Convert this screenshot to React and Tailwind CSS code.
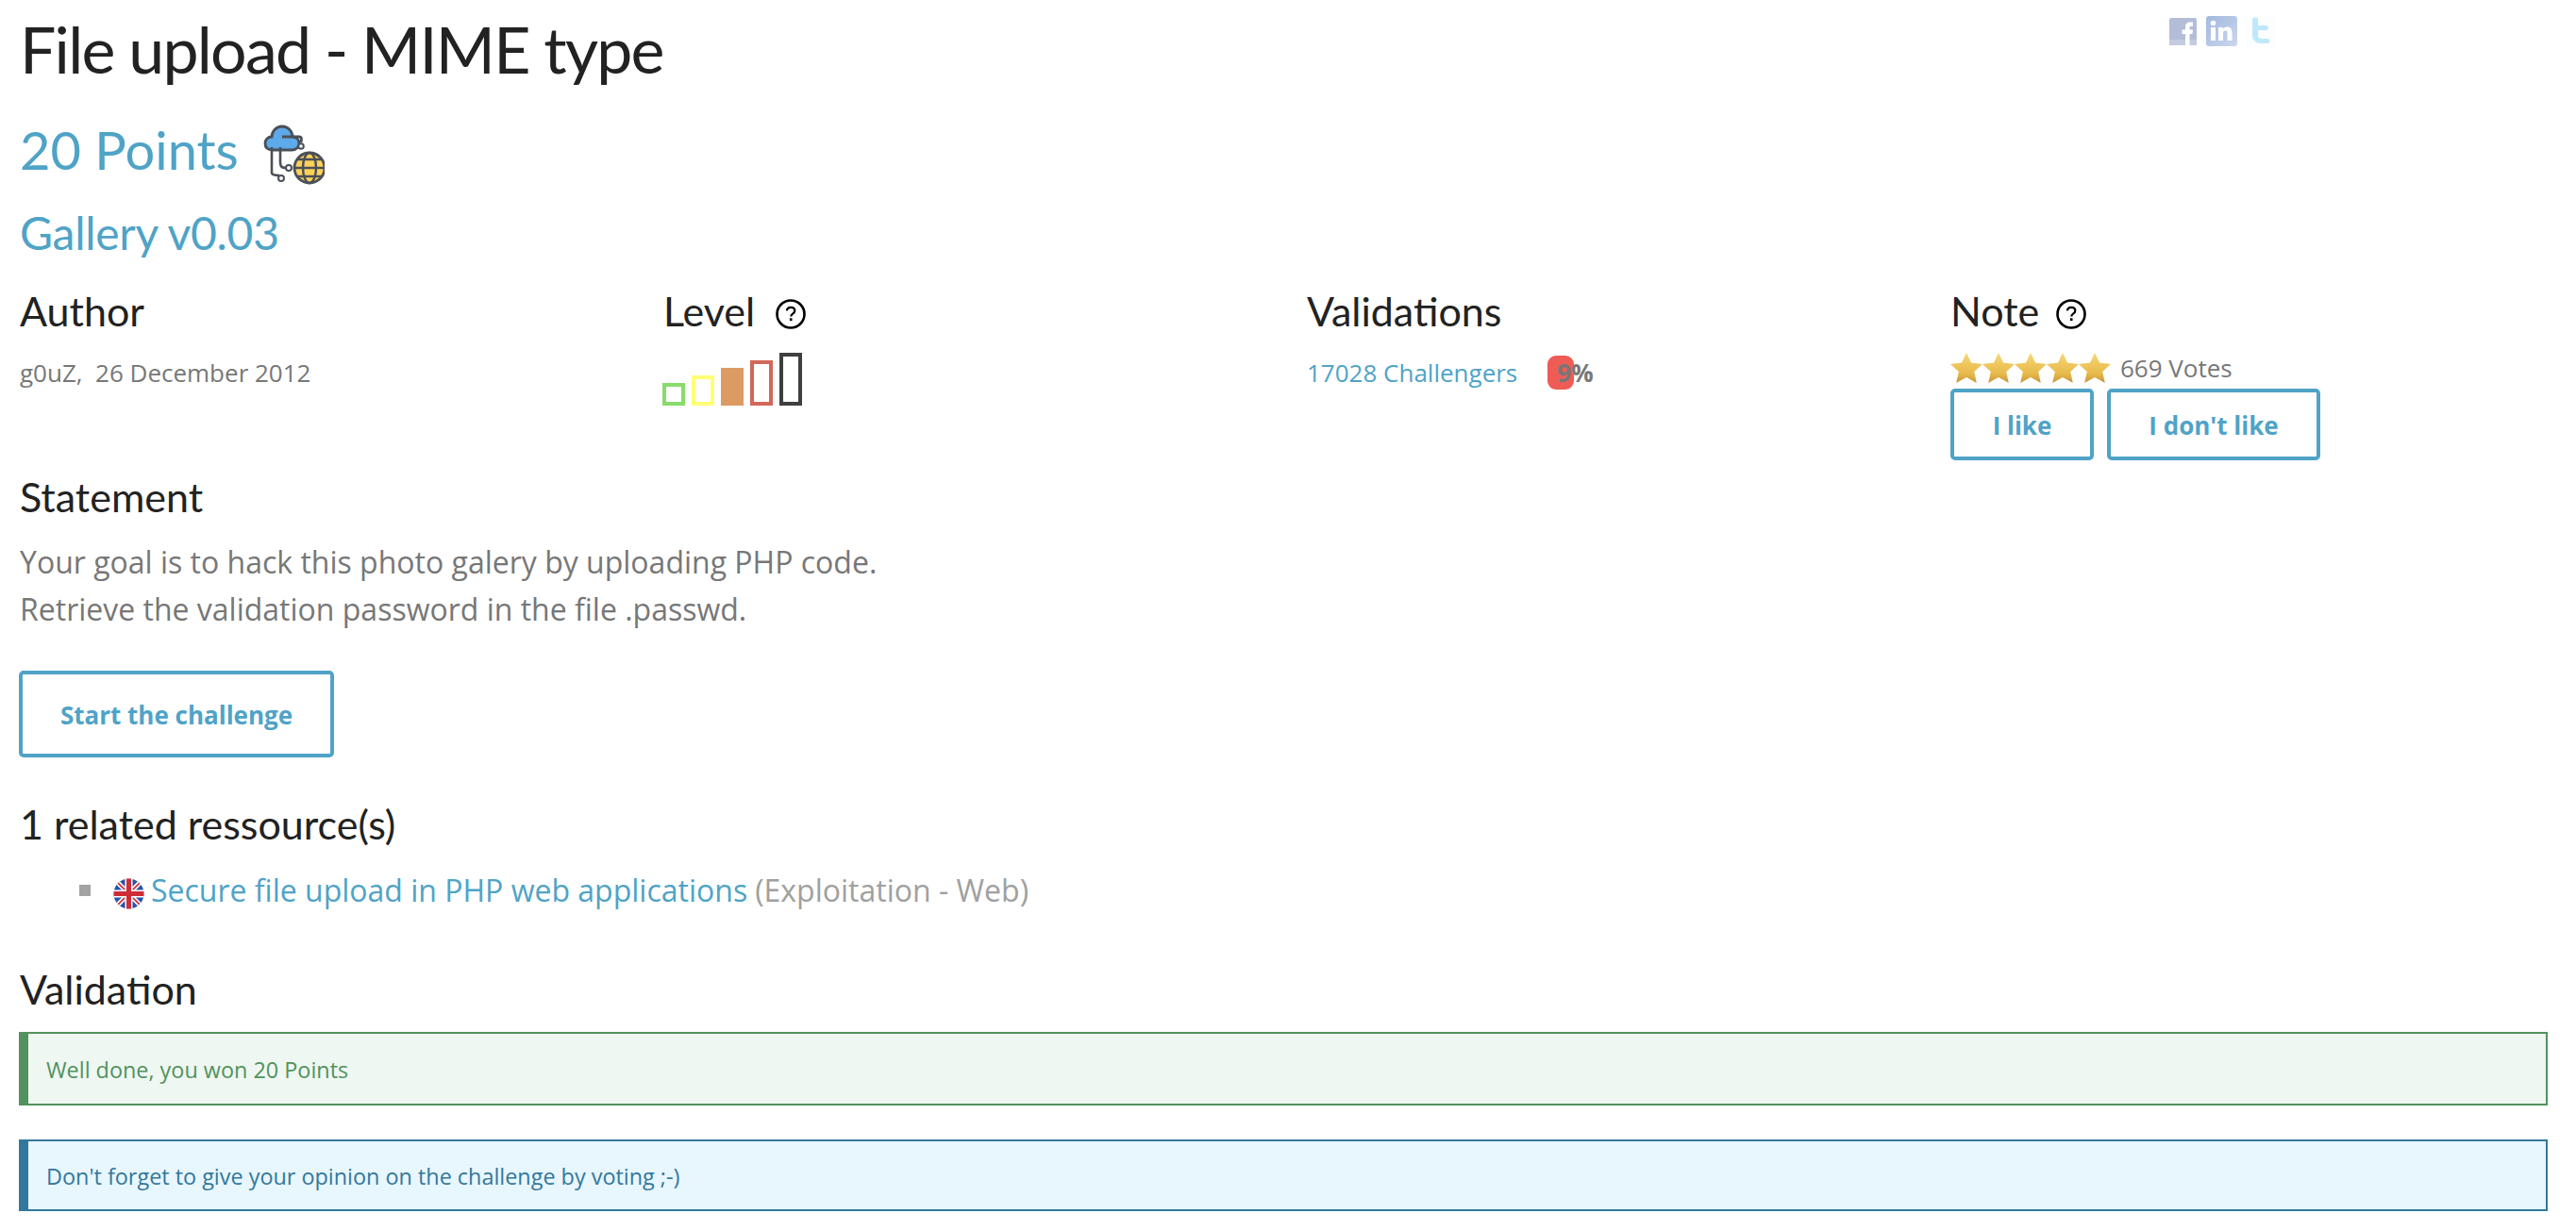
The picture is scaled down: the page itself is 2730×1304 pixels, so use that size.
const HEADING = "font-['Lato',sans-serif]"
const SECTION = `${HEADING} text-[43px] leading-[56px] text-[#222222]`

function HelpIcon({ className }) {
  return (
    <svg width="34" height="34" viewBox="0 0 34 34" className={`mt-[14px] ${className}`}>
      <circle cx="17" cy="17" r="14.5" fill="#fff" stroke="#000" strokeWidth="2.6" />
      <path d="M12.8 13.4c.3-2.4 2-3.6 4.3-3.6 2.5 0 4.2 1.4 4.2 3.5 0 1.7-.9 2.5-2.2 3.3-1.3.8-1.8 1.4-1.8 2.9" fill="none" stroke="#000" strokeWidth="2.2" />
      <rect x="15.9" y="21.3" width="2.6" height="2.8" fill="#000" />
    </svg>
  )
}

function CloudIcon() {
  return (
    <svg width="66" height="66" viewBox="0 0 66 66" className="ml-[25px] mt-[10px]">
      <path d="M11 28c-6 0-8-3.500-8-7 0-4 3-7 7-7 0-6 5-11 11-11s11 5 11 11c4 0 7 3 7 7 0 3.500-3 7-7 7z" fill="#5da9e9" stroke="#4a5058" strokeWidth="2.800" />
      <path d="M21 14h18c4 0 2 5 2 6" fill="none" stroke="#4a5058" strokeWidth="2.800" />
      <circle cx="41" cy="24" r="2.800" fill="#fff" stroke="#4a5058" strokeWidth="2" />
      <path d="M14 28v16c0 6 3 6 8 6M5 28v27c0 2 2 3 8 3" fill="none" stroke="#4a5058" strokeWidth="2.600" transform="translate(5 -3)" />
      <circle cx="28" cy="47" r="3" fill="#fff" stroke="#4a5058" strokeWidth="2" />
      <circle cx="20" cy="58" r="3" fill="#fff" stroke="#4a5058" strokeWidth="2" />
      <circle cx="50" cy="47" r="16" fill="#ffd257" stroke="#4a5058" strokeWidth="2.800" />
      <ellipse cx="50" cy="47" rx="7" ry="16" fill="none" stroke="#4a5058" strokeWidth="2.500" />
      <path d="M34 47h32M37 38h26M37 56h26" fill="none" stroke="#4a5058" strokeWidth="2.500" />
    </svg>
  )
}

function LevelBars() {
  return (
    <div className="flex items-end gap-[7px] mt-[16px] ml-[-1px] h-[56px]">
      <div className="w-[24px] h-[24px] border-[4px] border-[#88dc6a]" />
      <div className="w-[24px] h-[32px] border-[4px] border-[#ffff77]" />
      <div className="w-[24px] h-[40px] bg-[#dc9b63]" />
      <div className="w-[24px] h-[48px] border-[4px] border-[#d2685a]" />
      <div className="w-[24px] h-[56px] border-[4px] border-[#3f3f3f]" />
    </div>
  )
}

function Star() {
  return (
    <svg width="34" height="32" viewBox="0 0 34 32">
      <defs>
        <linearGradient id="starFill" x1="0" y1="0" x2="0" y2="1">
          <stop offset="0" stopColor="#f6d877" />
          <stop offset="0.7" stopColor="#e8b94a" />
          <stop offset="1" stopColor="#c9933a" />
        </linearGradient>
      </defs>
      <path d="M17 0l5 10.500 12 1.500-8.800 8 2.600 12L17 26l-10.800 6 2.600-12L0 12l12-1.500z" fill="url(#starFill)" />
    </svg>
  )
}

function Flag() {
  return (
    <svg width="33" height="33" viewBox="0 0 33 33" className="mr-[7px] shrink-0 translate-y-[3px]">
      <defs>
        <clipPath id="flagClip"><circle cx="16.500" cy="16.500" r="16" /></clipPath>
      </defs>
      <g clipPath="url(#flagClip)">
        <rect width="33" height="33" fill="#2a52a8" />
        <path d="M0 0L33 33M33 0L0 33" stroke="#fff" strokeWidth="5" />
        <path d="M0 0L33 33M33 0L0 33" stroke="#cf2d35" strokeWidth="1.600" />
        <path d="M16.500 0V33M0 16.500H33" stroke="#fff" strokeWidth="8" />
        <path d="M16.500 0V33M0 16.500H33" stroke="#cf2d35" strokeWidth="5" />
      </g>
    </svg>
  )
}

function Social() {
  return (
    <div className="flex items-start gap-[3px] mr-[288px] mt-[17px]">
      <svg width="30" height="30" viewBox="0 0 30 30" className="mt-[2px] mr-[6px]">
        <rect width="29" height="29" rx="2" fill="#b4bdd8" />
        <rect y="23" width="29" height="6" fill="#c3cbe0" />
        <path d="M17 29V17h-3.500v-4.500H17V9.500C17 6 19 4.500 22 4.500h3v4.200h-2c-1.200 0-1.500.6-1.500 1.600v2.200h3.500l-.5 4.500h-3v12z" fill="#fff" />
      </svg>
      <svg width="33" height="32" viewBox="0 0 33 32">
        <defs>
          <linearGradient id="inFill" x1="0" y1="0" x2="1" y2="1">
            <stop offset="0" stopColor="#a3b8de" />
            <stop offset="1" stopColor="#cad7ee" />
          </linearGradient>
        </defs>
        <rect width="33" height="32" rx="3" fill="url(#inFill)" />
        <rect x="5" y="12" width="5" height="14" fill="#fff" />
        <circle cx="7.500" cy="7.500" r="2.800" fill="#fff" />
        <path d="M13 12h4.800v2c1-1.600 2.700-2.400 4.500-2.400 3.600 0 5.200 2.300 5.200 6V26h-5v-7.500c0-1.800-.6-2.900-2.100-2.900-1.600 0-2.400 1.200-2.400 3V26h-5z" fill="#fff" />
      </svg>
      <svg width="32" height="32" viewBox="0 0 32 32" className="ml-[6px]">
        <rect width="32" height="32" fill="#fbfdfe" />
        <path d="M7 4c0-1.500 1-2.500 2.600-2.500h1C12.100 1.500 13 2.500 13 4v6h8.500c1.500 0 2.500 1 2.500 2.500S23 15 21.500 15H13v5c0 2.500 1.200 4 4 4h6c1.500 0 2.500 1 2.500 2.500S24.500 29 23 29h-7C10 29 7 25.500 7 20z" fill="#bfe9fa" />
      </svg>
    </div>
  )
}

function OutlineButton({ label, className }) {
  return (
    <div className={`flex items-center justify-center border-[4px] border-[#4fa3c7] rounded-[5px] pt-[2px] font-bold text-[#4fa3c7] ${className}`}>
      {label}
    </div>
  )
}

function Alert({ text, className }) {
  return (
    <div className={`flex items-center border-2 border-l-[10px] pl-[19px] pt-[3px] text-[23.4px] ${className}`}>
      {text}
    </div>
  )
}

export default function App() {
  return (
    <div className="min-h-[1304px] bg-white pl-[20px] pr-[30px] font-['Open_Sans',sans-serif] text-[#777777] overflow-hidden">
      <div className="flex items-start justify-between">
        <h1 className={`${HEADING} text-[68px] leading-[76px] text-[#222222] tracking-[-1.75px] mt-[14px] ml-[1px]`}>File upload - MIME type</h1>
        <Social />
      </div>

      <div className="flex items-center mt-[34px] ml-[1px] h-[70px]">
        <span className={`${HEADING} text-[56px] leading-[70px] text-[#4fa3c7]`}>20 Points</span>
        <CloudIcon />
      </div>
      <div className={`${HEADING} text-[48px] leading-[60px] text-[#4fa3c7] tracking-[-0.3px] mt-[23px] ml-[1px]`}>Gallery v0.03</div>

      <div className="grid grid-cols-[682px_682px_682px_682px] mt-[25px] ml-[1px]">
        <div>
          <div className={SECTION}>Author</div>
          <div className="text-[26px] leading-[36px] mt-[19px]">g0uZ,&nbsp; 26 December 2012</div>
        </div>
        <div>
          <div className="flex">
            <span className={SECTION}>Level</span>
            <HelpIcon className="ml-[21px]" />
          </div>
          <LevelBars />
        </div>
        <div>
          <div className={SECTION}>Validations</div>
          <div className="flex items-center text-[26px] leading-[36px] mt-[19px]">
            <span className="text-[#4fa3c7]">17028 Challengers</span>
            <span className="relative ml-[32px] font-bold text-[#777777]">
              <span className="absolute left-0 top-0 h-[36px] w-[28px] rounded-[9px] bg-[#ef5b55]" />
              <span className="relative pl-[10px]">9%</span>
            </span>
          </div>
        </div>
        <div>
          <div className="flex">
            <span className={SECTION}>Note</span>
            <HelpIcon className="ml-[17px]" />
          </div>
          <div className="flex items-center mt-[17px] h-[30px]">
            <Star /><Star /><Star /><Star /><Star />
            <span className="text-[26px] leading-[30px] ml-[10px]">669 Votes</span>
          </div>
          <div className="flex gap-[14px] mt-[7px] text-[26px]">
            <OutlineButton label="I like" className="w-[152px] h-[76px]" />
            <OutlineButton label="I don't like" className="w-[226px] h-[76px]" />
          </div>
        </div>
      </div>

      <div className={`${SECTION} mt-[11px] ml-[1px]`}>Statement</div>
      <div className="text-[32px] leading-[50px] ml-[1px] mt-[16px]">
        <p>Your goal is to hack this photo galery by uploading PHP code.</p>
        <p>Retrieve the validation password in the file .passwd.</p>
      </div>

      <OutlineButton label="Start the challenge" className="w-[334px] h-[92px] mt-[40px] text-[26px]" />

      <div className={`${SECTION} mt-[43px] ml-[1px]`}>1 related ressource(s)</div>
      <div className="flex items-center text-[32px] leading-[50px] mt-[17px] ml-[64px]">
        <span className="w-[12px] h-[12px] bg-[#a3a3a3] mr-[24px]" />
        <Flag />
        <span className="text-[#4fa3c7]">Secure file upload in PHP web applications</span>
        <span className="text-[#a0a0a0] ml-[8px]">(Exploitation - Web)</span>
      </div>

      <div className={`${SECTION} mt-[52px] ml-[1px]`}>Validation</div>
      <Alert text="Well done, you won 20 Points" className="mt-[17px] h-[78px] border-[#52925e] bg-[#eef7f1] text-[#52925e]" />
      <Alert text="Don't forget to give your opinion on the challenge by voting ;-)" className="mt-[36px] h-[76px] border-[#33789c] bg-[#e8f6fd] text-[#33789c]" />
    </div>
  )
}
